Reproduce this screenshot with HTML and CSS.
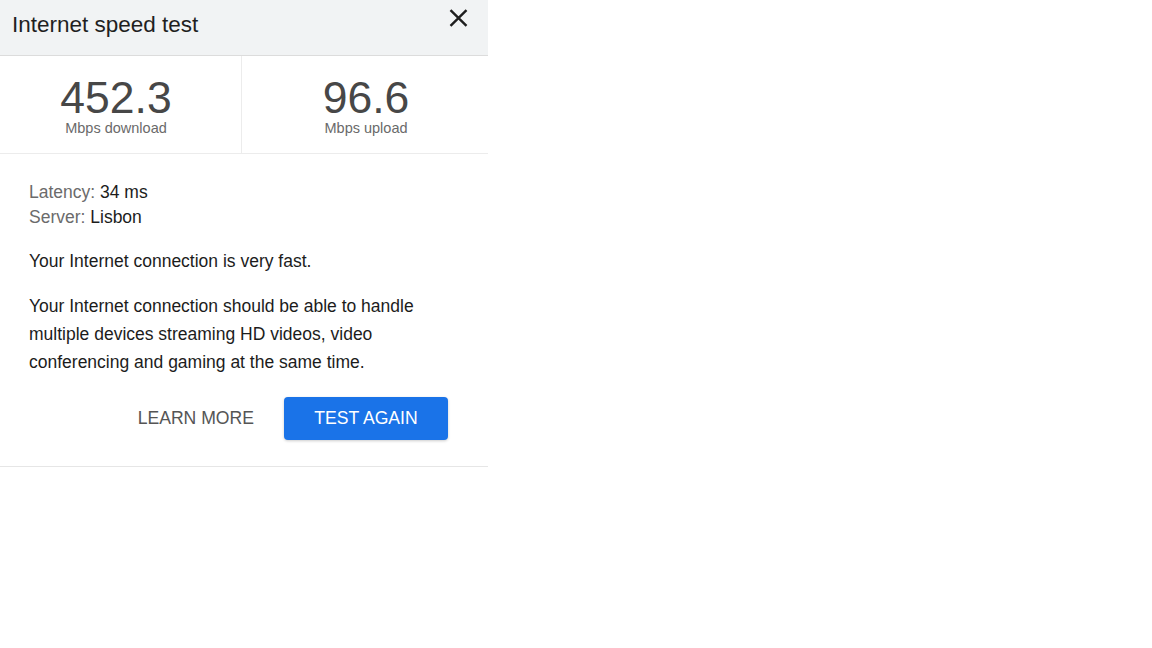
FILE: index.html
```html
<!DOCTYPE html>
<html lang="en">

<head>
  <meta charset="UTF-8" />
  <title>Internet speed test</title>
  <link rel="stylesheet" href="styles.css">
</head>

<body>
  <div class="panel">
    <div class="header">
      <span class="title">Internet speed test</span>
      <span class="close">
        <svg width="19" height="18" viewBox="0 0 19 18">
          <path d="M1.5 1.2 L17.5 16.8 M17.5 1.2 L1.5 16.8" stroke="#1e1e1e" stroke-width="2.4" fill="none" />
        </svg>
      </span>
    </div>

    <div class="stats">
      <div class="stat">
        <div class="value">452.3</div>
        <div class="unit">Mbps download</div>
      </div>
      <div class="stat">
        <div class="value">96.6</div>
        <div class="unit">Mbps upload</div>
      </div>
    </div>

    <div class="content">
      <div class="meta">
        <div><span class="label">Latency:</span> 34 ms</div>
        <div><span class="label">Server:</span> Lisbon</div>
      </div>
      <p class="summary">Your Internet connection is very fast.</p>
      <p class="detail">Your Internet connection should be able to handle multiple devices streaming HD videos, video
        conferencing and gaming at the same time.</p>
      <div class="actions">
        <button class="link-btn">LEARN MORE</button>
        <button class="primary-btn">TEST AGAIN</button>
      </div>
    </div>
  </div>
</body>

</html>
```

FILE: styles.css
```css
body {
  margin: 0;
  padding: 0;
  font-family: "Liberation Sans", Arial, sans-serif;
  background: #fff;
  color: #222;
}

.panel {
  width: 488px;
  border-bottom: 1px solid #e6e6e6;
}

.header {
  height: 56px;
  background: #f1f3f4;
  border-bottom: 1px solid #dcdcdc;
  display: flex;
  justify-content: space-between;
  align-items: flex-start;
  box-sizing: border-box;
}

.title {
  font-size: 22.5px;
  color: #1f1f1f;
  margin: 12px 0 0 12px;
}

.close {
  margin: 9px 20px 0 0;
}

.stats {
  display: flex;
  height: 97px;
  border-bottom: 1px solid #ececec;
}

.stat {
  flex: 1;
  display: flex;
  flex-direction: column;
  align-items: center;
  padding-top: 20px;
}

.stat:first-child {
  border-right: 1px solid #ececec;
  flex: 0 0 242px;
  box-sizing: border-box;
  padding-right: 9px;
}

.stat:last-child {
  padding-left: 2px;
}

.value {
  font-size: 44.5px;
  line-height: 44px;
  color: #474747;
}

.unit {
  font-size: 14.5px;
  line-height: 17px;
  color: #6a6a6a;
}

.content {
  padding: 26px 40px 26px 29px;
  font-size: 17.5px;
  color: #1c1c1c;
}

.meta {
  line-height: 25px;
}

.label {
  color: #6b6b6b;
}

.summary {
  margin: 21px 0 0;
  line-height: 20px;
}

.detail {
  margin: 21px 0 0;
  line-height: 28px;
}

.actions {
  display: flex;
  justify-content: flex-end;
  align-items: center;
  gap: 30px;
  margin-top: 21px;
}

.link-btn {
  background: none;
  border: none;
  font-family: inherit;
  font-size: 17.6px;
  color: #555;
  padding: 0;
}

.primary-btn {
  background: #1a73e8;
  color: #fff;
  border: none;
  border-radius: 4px;
  font-family: inherit;
  font-size: 17.6px;
  width: 164px;
  height: 43px;
  box-shadow: 0 1px 3px rgba(0, 0, 0, 0.2);
}
```
